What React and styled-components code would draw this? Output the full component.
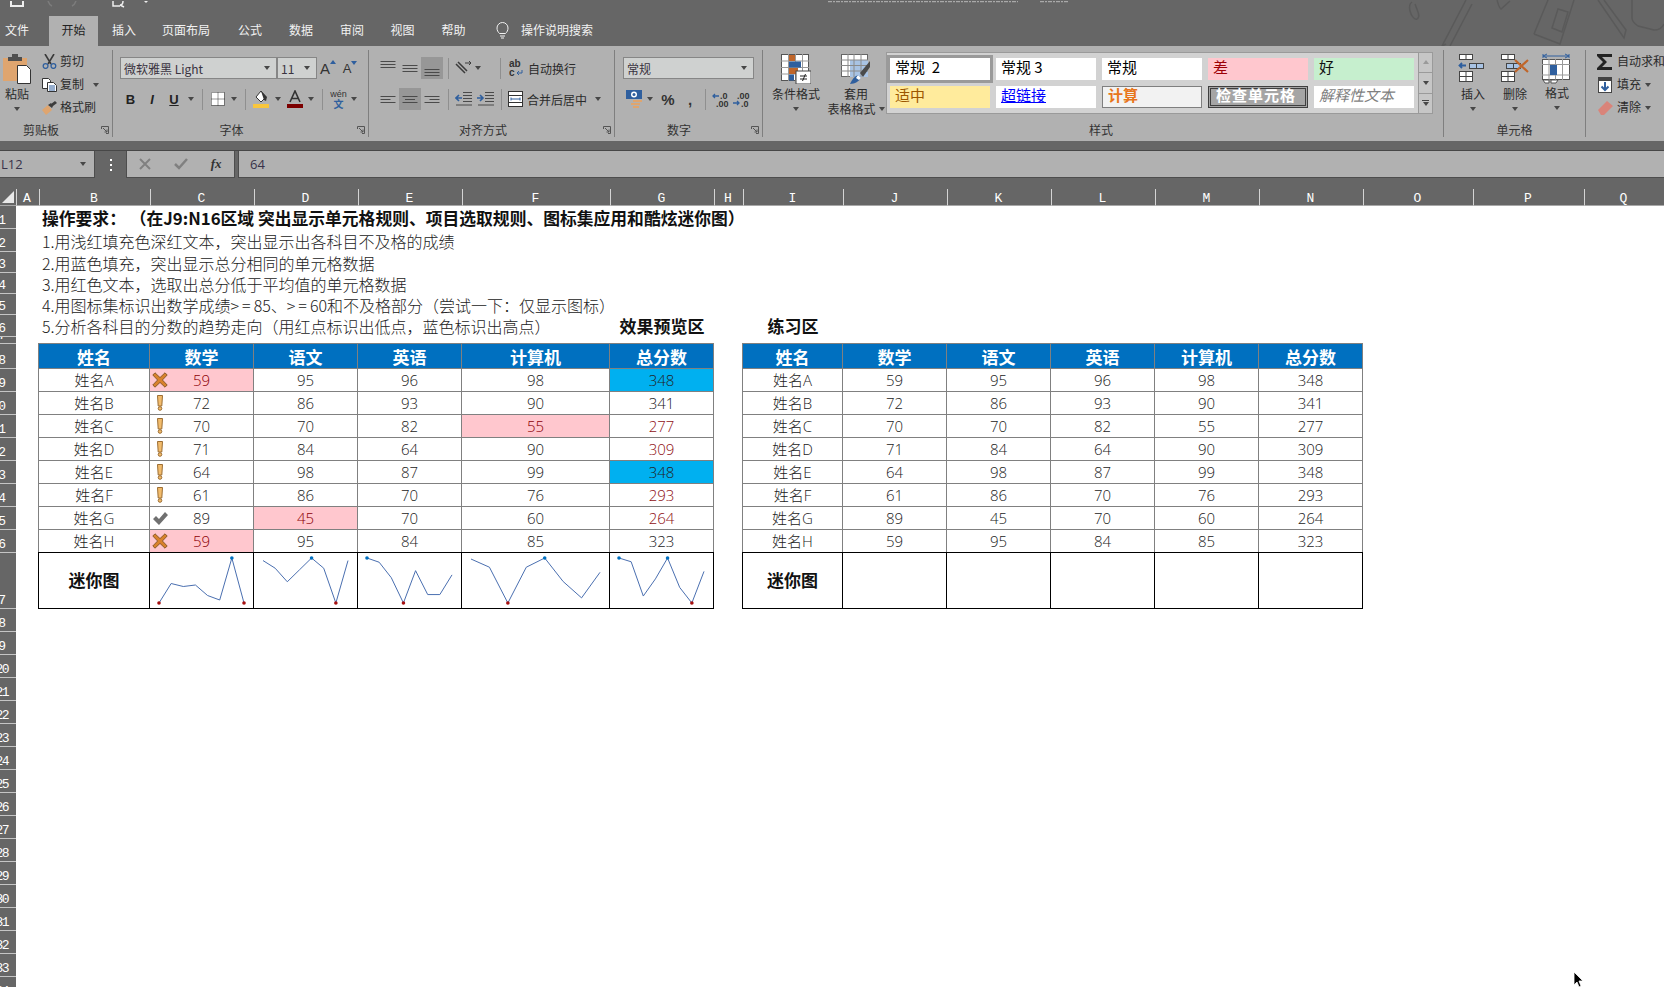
import styled, { createGlobalStyle } from 'styled-components'

const GlobalStyle = createGlobalStyle`
  html, body {
    margin: 0;
    padding: 0;
    height: 987px;
    overflow: hidden;
    background: #fff;
    font-family: "Noto Sans", "Noto Sans CJK SC", sans-serif;
  }
  * { box-sizing: border-box; }
`

const RIBBON = '#b1b1b1'
const DARK = '#666666'
const CJK = '"Noto Sans CJK SC", "Noto Sans", sans-serif'
const LIGHT = '"Open Sans", "Noto Sans CJK SC", sans-serif'

const Page = styled.div`
  position: relative;
  width: 1664px;
  height: 987px;
  overflow: hidden;
  background: #fff;
`

/* ---------- title bar ---------- */

const TitleBar = styled.div`
  position: relative;
  height: 46px;
  background: ${DARK};
`

const QuickRow = styled.div`
  height: 16px;
  overflow: hidden;
`

const Doodles = styled.svg`
  position: absolute;
  top: 0;
  left: 1400px;
`

const TabRow = styled.div`
  display: flex;
  height: 30px;
  font: 12px/27px ${CJK};
  color: #f2f2f2;
`

const Tab = styled.div`
  width: ${(p) => p.$w}px;
  margin-right: ${(p) => p.$mr || 0}px;
  text-align: center;
  white-space: nowrap;
  background: ${(p) => (p.$active ? RIBBON : 'transparent')};
  color: ${(p) => (p.$active ? '#222' : '#f2f2f2')};
`

const SearchHint = styled.div`
  display: flex;
  align-items: center;
  align-self: flex-start;
  height: 27px;
  gap: 12px;
  margin-left: 14px;
`

/* ---------- ribbon ---------- */

const Ribbon = styled.div`
  display: flex;
  height: 95px;
  padding-top: 4px;
  background: ${RIBBON};
  font: 12px/15px ${CJK};
  color: #2b2b2b;
`

const Group = styled.div`
  display: flex;
  flex-direction: column;
  flex: none;
  width: ${(p) => p.$w}px;
  height: 87px;
  border-right: ${(p) => (p.$last ? 'none' : '1px solid #7f7f7f')};
  overflow: ${(p) => (p.$last ? 'hidden' : 'visible')};
`

const GroupBody = styled.div`
  flex: 1;
  display: flex;
  flex-direction: ${(p) => (p.$row ? 'row' : 'column')};
  padding-left: ${(p) => p.$pl || 0}px;
  padding-top: ${(p) => p.$pt || 0}px;
`

const GroupFoot = styled.div`
  display: grid;
  grid-template-columns: 1fr auto 1fr;
  align-items: center;
  height: 15px;
  line-height: 15px;
  color: #333;
`

const FootLabel = styled.span`
  grid-column: 2;
  margin-right: ${(p) => p.$shift || 0}px;
`

const Launcher = styled.svg`
  grid-column: 3;
  justify-self: end;
  margin-right: 3px;
`

const ToolRow = styled.div`
  display: flex;
  align-items: center;
  height: 22px;
  margin-bottom: ${(p) => p.$mb || 0}px;
`

const Slot = styled.div`
  flex: none;
  display: flex;
  align-items: center;
  justify-content: center;
  width: ${(p) => p.$w}px;
  height: 22px;
  background: ${(p) => (p.$on ? '#979797' : 'transparent')};
`

const Rule = styled.div`
  width: 1px;
  height: 21px;
  background: #8f8f8f;
`

const Caret = styled.span`
  display: inline-block;
  flex: none;
  width: 0;
  height: 0;
  margin-left: ${(p) => p.$ml || 0}px;
  margin-right: ${(p) => p.$mr || 0}px;
  border-top: 4px solid #474747;
  border-left: 3.5px solid transparent;
  border-right: 3.5px solid transparent;
`

const Select = styled.div`
  display: flex;
  align-items: center;
  justify-content: space-between;
  flex: none;
  width: ${(p) => p.$w}px;
  height: 22px;
  padding: 0 6px 0 3px;
  background: #cfd1d0;
  border: 1px solid #868686;
  font-size: 12px;
  color: #3a3340;
  white-space: nowrap;
`

const BoldMark = styled.span`
  font: ${(p) => (p.$italic ? 'italic 700' : '700')} 13px "Liberation Sans", sans-serif;
  text-decoration: ${(p) => (p.$under ? 'underline' : 'none')};
  color: #222;
`

const SizeA = styled.span`
  display: inline-flex;
  align-items: flex-start;
  font: 400 ${(p) => p.$size}px/1 "Liberation Sans", sans-serif;
  color: #333;
`

const Tri = styled.span`
  display: inline-block;
  width: 0;
  height: 0;
  margin-top: -1px;
  border-left: 3px solid transparent;
  border-right: 3px solid transparent;
  ${(p) =>
    p.$down
      ? `border-top: 4px solid ${p.$color || '#2f5f9e'};`
      : `border-bottom: 4px solid ${p.$color || '#2f5f9e'};`}
`

const Wen = styled.span`
  display: flex;
  flex-direction: column;
  align-items: center;
  font: 9px/9px "Liberation Sans", sans-serif;
  color: #333;
  & > b {
    font: 700 10px/10px ${CJK};
    color: #2f5f9e;
  }
`

const Mark = styled.span`
  font: 700 ${(p) => p.$size}px/1 "Liberation Sans", sans-serif;
  color: #333;
`

const RowLabel = styled.span`
  margin-left: 2px;
  white-space: nowrap;
`

/* clipboard */

const BigCol = styled.div`
  flex: none;
  display: flex;
  flex-direction: column;
  align-items: center;
  width: ${(p) => p.$w}px;
  padding-top: ${(p) => p.$pt ?? 4}px;
  white-space: nowrap;
`

const BigIcon = styled.div`
  display: flex;
  justify-content: center;
  height: 30px;
  margin-bottom: 2px;
`

const CaretLine = styled.div`
  display: flex;
  align-items: center;
  justify-content: center;
  height: 15px;
`

const SmallCol = styled.div`
  display: flex;
  flex-direction: column;
  margin-left: ${(p) => p.$ml || 0}px;
`

const SmallItem = styled.div`
  display: flex;
  align-items: center;
  height: 23px;
  white-space: nowrap;
`

const SmallText = styled.span`
  margin-top: -2px;
`

const SmallIcon = styled.div`
  display: flex;
  justify-content: center;
  flex: none;
  width: ${(p) => p.$w || 18}px;
  margin-right: ${(p) => p.$mr ?? 2}px;
`

/* style gallery */

const Gallery = styled.div`
  display: flex;
  flex: none;
  width: 547px;
  height: 62px;
  margin-top: 2px;
  margin-left: 1px;
  background: #d2d2d2;
  border: 1px solid #9a9a9a;
`

const StyleGrid = styled.div`
  display: grid;
  grid-template-columns: repeat(5, 100px);
  grid-template-rows: 22px 22px;
  gap: 6px;
  flex: 1;
  padding: 5px 0 0 3px;
`

const StyleCell = styled.div`
  display: flex;
  align-items: center;
  padding: 0 0 5px 5px;
  font: ${(p) => p.$weight || 400} 15px/17px ${CJK};
  font-style: ${(p) => (p.$italic ? 'italic' : 'normal')};
  letter-spacing: ${(p) => p.$spacing || 0}px;
  text-decoration: ${(p) => (p.$link ? 'underline' : 'none')};
  background: ${(p) => p.$bg || '#fff'};
  color: ${(p) => p.$color || '#000'};
  border: ${(p) => p.$border || 'none'};
  box-shadow: ${(p) => (p.$selected ? '0 0 0 3px #9a9a9a' : 'none')};
  white-space: pre;
`

const Scroller = styled.div`
  display: flex;
  flex-direction: column;
  flex: none;
  width: 14px;
  border-left: 1px solid #9a9a9a;
`

const ScrollBtn = styled.div`
  flex: 1;
  display: flex;
  flex-direction: column;
  align-items: center;
  justify-content: center;
  gap: 1px;
  border-bottom: ${(p) => (p.$last ? 'none' : '1px solid #9a9a9a')};
  background: #c6c6c6;
`

const Bar = styled.span`
  width: 7px;
  height: 1px;
  background: #444;
`

/* ---------- formula bar ---------- */

const Band = styled.div`
  height: 10px;
  background: ${DARK};
  border-bottom: 1px solid #474747;
`

const FormulaBar = styled.div`
  display: flex;
  height: 27px;
  background: ${DARK};
`

const FormulaBox = styled.div`
  display: flex;
  align-items: center;
  flex: ${(p) => (p.$grow ? 1 : 'none')};
  width: ${(p) => p.$w || 0}px;
  margin-left: ${(p) => (p.$grow ? 3 : 0)}px;
  padding-left: ${(p) => (p.$grow ? 11 : 0)}px;
  background: ${RIBBON};
  border-left: ${(p) => (p.$first ? 'none' : '1px solid #4d4d4d')};
  border-right: ${(p) => (p.$grow ? 'none' : '1px solid #4d4d4d')};
  border-bottom: 1px solid #4d4d4d;
  font: 13px ${LIGHT};
  color: #38334a;
`

const NameText = styled.span`
  flex: 1;
  padding-left: 1px;
`

const Dots = styled.div`
  display: flex;
  flex-direction: column;
  align-items: center;
  justify-content: center;
  gap: 3px;
  width: 31px;
  & > i {
    width: 2px;
    height: 2px;
    background: #fff;
  }
`

const FxButton = styled.div`
  display: flex;
  justify-content: center;
  align-items: center;
  width: 36px;
  font: italic 700 13px "Liberation Serif", serif;
  color: #333;
`

/* ---------- sheet ---------- */

const colWidths = [16, 23, 111, 104, 104, 104, 148, 104, 29, 100, 104, 104, 104, 104, 104, 110, 111, 80]
const colLetters = ['A', 'B', 'C', 'D', 'E', 'F', 'G', 'H', 'I', 'J', 'K', 'L', 'M', 'N', 'O', 'P', 'Q']
const rowHeights = [23, 23, 21, 21, 21, 22, 7, 25, 23, 23, 23, 23, 23, 23, 23, 23, 56, ...Array(17).fill(23)]

const HeaderGap = styled.div`
  height: 11px;
  background: ${DARK};
`

const Sheet = styled.div`
  display: grid;
  grid-template-columns: ${colWidths.map((w) => `${w}px`).join(' ')};
  grid-template-rows: 17px ${rowHeights.map((h) => `${h}px`).join(' ')};
  background: #fff;
`

const Corner = styled.div`
  grid-column: 1;
  grid-row: 1;
  display: flex;
  align-items: flex-end;
  justify-content: flex-end;
  padding: 0 2px 2px 0;
  background: ${DARK};
  border-bottom: 1px solid #a8a8a8;
`

const ColHead = styled.div`
  grid-column: ${(p) => p.$col};
  grid-row: 1;
  padding-right: 2px;
  overflow: hidden;
  text-align: center;
  font: 13px/20px "Liberation Mono", monospace;
  color: #fff;
  background: ${DARK};
  border-left: 1px solid #d4d4d4;
  border-bottom: 1px solid #a8a8a8;
`

// the header is cut off on the left, so two-digit rows lose their first digit
const RowHead = styled.div`
  grid-column: 1;
  grid-row: ${(p) => p.$row + 1};
  display: flex;
  align-items: flex-end;
  justify-content: flex-end;
  padding-right: ${(p) => (p.$row > 9 ? 8 : 10)}px;
  overflow: hidden;
  font: 13px/15px "Liberation Mono", monospace;
  letter-spacing: ${(p) => (p.$row >= 20 ? -1.5 : p.$row > 9 ? 2 : 0)}px;
  color: #fff;
  background: ${DARK};
  border-bottom: 1px solid #c4c4c4;
`

const Note = styled.div`
  grid-column: 3 / span 6;
  grid-row: ${(p) => p.$row + 1};
  display: flex;
  align-items: center;
  padding-left: 3px;
  white-space: pre;
  font: ${(p) => (p.$bold ? '700 16.8px' : '300 16px')}/20px ${CJK};
  color: ${(p) => (p.$bold ? '#111' : '#222')};
`

const WideSign = styled.span`
  letter-spacing: 3px;
`

const ZoneTitle = styled.div`
  grid-column: ${(p) => p.$col};
  grid-row: 7;
  display: flex;
  align-items: center;
  justify-content: center;
  white-space: nowrap;
  font: 700 17px/20px ${CJK};
  color: #111;
`

const firstShadow = (color) => `-1px 0 0 ${color}`

const Cell = styled.div`
  grid-column: ${(p) => p.$col};
  grid-row: ${(p) => p.$row + 1};
  display: flex;
  align-items: center;
  justify-content: center;
  white-space: nowrap;
  font: 300 15px/20px ${LIGHT};
  background: ${(p) => p.$bg || '#fff'};
  color: ${(p) => p.$color || '#222'};
  border-right: 1px solid #808080;
  border-bottom: 1px solid #808080;
  box-shadow: ${(p) => (p.$first ? firstShadow('#808080') : 'none')};
`

const HeadCell = styled(Cell)`
  padding-top: 2px;
  font: 700 17px/20px ${CJK};
  color: #fff;
  background: #0070c0;
  box-shadow: 0 -1px 0 #808080 ${(p) => (p.$first ? `, ${firstShadow('#808080')}, -1px -1px 0 #808080` : '')};
`

const IconCell = styled(Cell)`
  display: grid;
  grid-template-columns: 1fr auto 1fr;
  & > svg {
    justify-self: start;
    margin-left: 2px;
  }
`

const TrendCell = styled.div`
  grid-column: ${(p) => p.$col};
  grid-row: ${(p) => p.$row + 1};
  display: flex;
  align-items: center;
  justify-content: center;
  padding-bottom: ${(p) => (p.$first ? 2 : 0)}px;
  font: 700 17px/20px ${CJK};
  color: #111;
  background: #fff;
  border-right: 1px solid #000;
  border-bottom: 1px solid #000;
  box-shadow: 0 -1px 0 #000 ${(p) => (p.$first ? `, ${firstShadow('#000')}, -1px -1px 0 #000` : '')};
`

const Pointer = styled.svg`
  position: absolute;
  left: 1573px;
  top: 972px;
`

/* ---------- drawings ---------- */

const LauncherIcon = () => (
  <Launcher width="8" height="8" viewBox="0 0 8 8" fill="none" stroke="#555">
    <path d="M.5 3V.5H7.5V7.5H5M2 2l4 4M6 3.5V6H3.5" />
  </Launcher>
)

const Lines = ({ v = 'mid', h = 'center' }) => {
  const top = { top: 1, mid: 5, bottom: 9 }[v]
  const wide = [15, 10, 15]
  return (
    <svg width="16" height="16" viewBox="0 0 16 16" stroke="#4a4a4a">
      {[0, 1, 2].map((i) => {
        const w = h === 'full' ? 15 : wide[i]
        const x = h === 'left' || h === 'full' ? 0.5 : h === 'right' ? 15.5 - w : 8 - w / 2
        return <path key={i} d={`M${x} ${top + i * 3 + 0.5}h${w}`} />
      })}
    </svg>
  )
}

const Indent = ({ right }) => (
  <svg width="17" height="14" viewBox="0 0 17 14" fill="none">
    <path d="M8 .5h9M8 3.500h9M8 6.500h9M8 9.500h9M1 13h16" stroke="#4a4a4a" />
    <path d={right ? 'M0 6h6M3 3l3 3-3 3' : 'M7 6H1M4 3 1 6l3 3'} stroke="#2f5f9e" strokeWidth="1.600" />
  </svg>
)

const PasteIcon = () => (
  <svg width="28" height="30" viewBox="0 0 28 30">
    <rect x="0" y="4" width="24" height="23" fill="#dfa56f" />
    <path d="M5 7V3h4V0h6v3h4v4z" fill="#4f4f4f" />
    <path d="M14.500 11.500h9l4 4v14h-13z" fill="#fff" stroke="#333" />
  </svg>
)

const ScissorsIcon = () => (
  <svg width="15" height="15" viewBox="0 0 15 15" fill="none">
    <path d="M3 0l6 10M12 0 6 10" stroke="#3a3a3a" strokeWidth="1.600" />
    <circle cx="3.600" cy="12" r="2.400" stroke="#2f5f9e" strokeWidth="1.300" />
    <circle cx="11.400" cy="12" r="2.400" stroke="#2f5f9e" strokeWidth="1.300" />
  </svg>
)

const CopyIcon = () => (
  <svg width="15" height="14" viewBox="0 0 15 14">
    <path d="M.5.5h6l2 2v8H.5z" fill="#fff" stroke="#333" />
    <path d="M5.500 4.500h6l3 3v6h-9z" fill="#fff" stroke="#333" />
    <path d="M7 8h6M7 10h6M7 12h6" stroke="#2f5f9e" />
  </svg>
)

const BrushIcon = () => (
  <svg width="15" height="14" viewBox="0 0 15 14">
    <path d="M0 9l6-5 4 5-6 5z" fill="#dfa56f" />
    <path d="M6 4l3-2 2 3-1 2z M9 3l4-3 2 2-4 3z" fill="#3c3c3c" />
  </svg>
)

const BorderIcon = () => (
  <svg width="14" height="14" viewBox="0 0 14 14">
    <rect width="13" height="13" fill="#fff" />
    <path d="M.5.5h13v13H.5zM7 .5v13M.5 7h13" fill="none" stroke="#333" strokeDasharray="1 1" />
  </svg>
)

const FillIcon = () => (
  <svg width="17" height="18" viewBox="0 0 17 18">
    <path d="M3 7l5-6 5 6-5 5z" fill="#fff" stroke="#333" />
    <path d="M8 1l6 6-1 4-2-1z" fill="#333" />
    <rect y="14" width="16" height="4" fill="#f9c63c" />
  </svg>
)

const FontColorIcon = () => (
  <svg width="16" height="18" viewBox="0 0 16 18">
    <path d="M3 12 8 1l5 11M5 8.500h6" fill="none" stroke="#333" strokeWidth="1.600" />
    <rect y="14" width="16" height="4" fill="#7c0000" />
  </svg>
)

const OrientIcon = () => (
  <svg width="17" height="16" viewBox="0 0 17 16" fill="none" stroke="#3b3b3b">
    <path d="M1 4l9 9M3 2l9 9" strokeWidth="1.500" />
    <path d="M10 3l6 0M16 3l-2-2M16 3l-2 2" />
  </svg>
)

const WrapIcon = () => (
  <svg width="15" height="18" viewBox="0 0 15 18">
    <text x="0" y="8" fontSize="10" fontWeight="700" fontFamily="Liberation Sans" fill="#333">ab</text>
    <text x="0" y="17" fontSize="10" fontWeight="700" fontFamily="Liberation Sans" fill="#333">c</text>
    <path d="M13 11v3H8M10 12l-2 2 2 2" fill="none" stroke="#2f5f9e" />
  </svg>
)

const MergeIcon = () => (
  <svg width="15" height="16" viewBox="0 0 15 16" fill="none">
    <rect x=".5" y=".5" width="14" height="15" fill="#fff" stroke="#333" />
    <path d="M.5 4.500h14M.5 11.500h14" stroke="#333" />
    <path d="M3 8h9M3 6.500v3M12 6.500v3" stroke="#2f5f9e" />
  </svg>
)

const MoneyIcon = () => (
  <svg width="17" height="18" viewBox="0 0 17 18">
    <rect width="16" height="9" fill="#2f5f9e" />
    <ellipse cx="8" cy="4.500" rx="3" ry="3" fill="#fff" />
    <circle cx="8" cy="4.500" r="1.500" fill="#2f5f9e" />
    <path d="M7 10h9v2H7zM5 13h9v2H5zM7 16h6v2H7z" fill="#dfa56f" />
  </svg>
)

const DecimalIcon = ({ more }) => (
  <svg width="18" height="15" viewBox="0 0 18 15" fontFamily="Liberation Sans" fontSize="9" fontWeight="700" fill="#333">
    <text x={more ? 4 : 8} y="7">{more ? '.00' : '.0'}</text>
    <text x={more ? 8 : 4} y="15">{more ? '.0' : '.00'}</text>
    <path d={more ? 'M0 11h6M4 9l2 2-2 2' : 'M7 4H1M3 2 1 4l2 2'} fill="none" stroke="#2f5f9e" strokeWidth="1.300" />
  </svg>
)

const CondIcon = () => (
  <svg width="30" height="30" viewBox="0 0 30 30">
    <rect x=".5" y=".5" width="27" height="26" fill="#fff" stroke="#555" />
    <path d="M7.500 0v27M14.500 0v27M21.500 0v27M0 7h28M0 13.500h28M0 20h28" stroke="#999" />
    <rect x="8" y="1" width="6" height="6" fill="#c0662a" />
    <rect x="8" y="7.500" width="12" height="6" fill="#2f5f9e" />
    <rect x="8" y="14" width="9" height="6" fill="#c0662a" />
    <rect x="8" y="20.500" width="5" height="6" fill="#2f5f9e" />
    <rect x="15" y="17" width="15" height="13" fill="#fff" stroke="#444" />
    <path d="M19 22h7M19 25h7M24.500 20l-3 7" stroke="#222" fill="none" />
  </svg>
)

const TableBrushIcon = () => (
  <svg width="30" height="30" viewBox="0 0 30 30">
    <rect x=".5" y=".5" width="26" height="22" fill="#fff" stroke="#666" />
    <rect x="9" y="6" width="18" height="17" fill="#a8c3e4" />
    <path d="M7 0v23M13 0v23M20 0v23M0 6h27M0 11.500h27M0 17h27" stroke="#8a8a8a" />
    <path d="M9 30c2-5 5-8 8-9l3 3c-2 3-6 6-11 6z" fill="#2f5f9e" />
    <path d="M15 24l2-3 3 3-2 2z" fill="#fff" />
    <path d="M19 19L29 7v6L22 23z" fill="#4a4a4a" />
  </svg>
)

const SmallTable = ({ x, y, w, h, cols, rows, fill }) => (
  <g>
    <rect x={x + 0.5} y={y + 0.5} width={w} height={h} fill={fill || '#fff'} stroke="#444" />
    {cols && <path d={`M${x + w / 2 + 0.5} ${y}v${h}`} stroke="#444" />}
    {rows && <path d={`M${x} ${y + h / 2 + 0.5}h${w}`} stroke="#444" />}
  </g>
)

const InsertIcon = ({ del }) => (
  <svg width="30" height="28" viewBox="0 0 30 28">
    <SmallTable x={1} y={0} w={13} h={5} cols />
    <SmallTable x={del ? 6 : 11} y={9} w={14} h={5} cols fill="#a8c3e4" />
    {!del && <path d="M8 11.500H2M4 9 1.500 11.500 4 14" fill="none" stroke="#2f5f9e" strokeWidth="1.800" />}
    <SmallTable x={1} y={17} w={13} h={10} cols rows />
    {del && <path d="M15 6l13 12M28 6 15 18" stroke="#c0662a" strokeWidth="2.200" />}
  </svg>
)

const FormatIcon = () => (
  <svg width="30" height="31" viewBox="0 0 30 31">
    <path d="M1 3h26M1 1v4M27 1v4M5 1 1 3l4 2M23 1l4 2-4 2" fill="none" stroke="#2f5f9e" />
    <rect x=".5" y="6.500" width="27" height="20" fill="#fff" stroke="#555" />
    <path d="M7 6v21M13.500 6v21M20.500 6v21M0 11.500h28M0 22h28" stroke="#999" />
    <rect x="8" y="12" width="7" height="10" fill="#2f5f9e" />
    <path d="M1 27h6v3H3zM9 27h7l-2 3H9z" fill="#fff" stroke="#555" />
  </svg>
)

const SumIcon = () => (
  <svg width="16" height="16" viewBox="0 0 16 16">
    <path d="M0 0h15v3H5l5 5-5 5h10v3H0v-2l6-6-6-6z" fill="#222" />
  </svg>
)

const DownFillIcon = () => (
  <svg width="14" height="16" viewBox="0 0 14 16">
    <rect x=".5" y=".5" width="13" height="15" fill="#fff" stroke="#444" />
    <rect width="14" height="4" fill="#444" />
    <path d="M7 5v8M3.500 9.500 7 13l3.500-3.500" fill="none" stroke="#2f5f9e" strokeWidth="2" />
  </svg>
)

const EraserIcon = () => (
  <svg width="15" height="14" viewBox="0 0 15 14">
    <path d="M0 9l9-9 6 5-9 9H3z" fill="#d9847a" />
  </svg>
)

const FailIcon = () => (
  <svg width="16" height="16" viewBox="0 0 16 16">
    <path
      d="M3 .8 8 5.600 13 .8 15.200 3 10.400 8l4.800 5-2.200 2.200L8 10.400l-5 4.800L.8 13l4.800-5L.8 3z"
      fill="#d9822b"
      stroke="#8a5a2a"
    />
  </svg>
)

const WarnIcon = () => (
  <svg width="16" height="16" viewBox="-4 0 16 16">
    <path d="M1.500.5h5l-.7 10.500H2.200z" fill="#f2bc6c" stroke="#9c6d32" />
    <circle cx="4" cy="13.500" r="1.800" fill="#f2bc6c" stroke="#9c6d32" />
  </svg>
)

const PassIcon = () => (
  <svg width="16" height="15" viewBox="0 0 16 15">
    <path d="M1 8l3-3 3 3 6-7 3 3-9 10z" fill="#707070" />
  </svg>
)

/* sparkline, with the low points red and the high points blue */
const Sparkline = ({ values, width }) => {
  const h = 56
  const lo = Math.min(...values)
  const hi = Math.max(...values)
  const padX = 9
  const pts = values.map((v, i) => [
    padX + (i * (width - padX * 2 - 1)) / (values.length - 1),
    h - 6 - ((v - lo) / (hi - lo)) * (h - 11),
  ])
  return (
    <svg width={width - 1} height={h - 1} viewBox={`0 0 ${width - 1} ${h - 1}`}>
      <polyline points={pts.map((p) => p.join(',')).join(' ')} fill="none" stroke="#4a6fb0" strokeWidth="1" />
      {pts.map((p, i) =>
        values[i] === lo || values[i] === hi ? (
          <circle key={i} cx={p[0]} cy={p[1]} r="1.800" fill={values[i] === lo ? '#a50f0f' : '#0070c0'} />
        ) : null,
      )}
    </svg>
  )
}

/* ---------- data ---------- */

const heads = ['姓名', '数学', '语文', '英语', '计算机', '总分数']

const students = [
  ['姓名A', 59, 95, 96, 98, 348],
  ['姓名B', 72, 86, 93, 90, 341],
  ['姓名C', 70, 70, 82, 55, 277],
  ['姓名D', 71, 84, 64, 90, 309],
  ['姓名E', 64, 98, 87, 99, 348],
  ['姓名F', 61, 86, 70, 76, 293],
  ['姓名G', 89, 45, 70, 60, 264],
  ['姓名H', 59, 95, 84, 85, 323],
]

const notes = [
  '1.用浅红填充色深红文本，突出显示出各科目不及格的成绩',
  '2.用蓝色填充，突出显示总分相同的单元格数据',
  '3.用红色文本，选取出总分低于平均值的单元格数据',
  <>
    4.用图标集标识出数学成绩<WideSign>&gt;=</WideSign>85、<WideSign>&gt;=</WideSign>60和不及格部分（尝试一下：仅显示图标）
  </>,
  '5.分析各科目的分数的趋势走向（用红点标识出低点，蓝色标识出高点）',
]

const galleryCells = [
  { text: '常规  2', selected: true },
  { text: '常规 3' },
  { text: '常规' },
  { text: '差', bg: '#ffc7ce', color: '#9c0006' },
  { text: '好', bg: '#c6efce', color: '#111' },
  { text: '适中', bg: '#ffeb9c', color: '#9c5700' },
  { text: '超链接', color: '#0000ff', link: true },
  { text: '计算', bg: '#f2f2f2', color: '#e8761c', weight: 700, border: '1px solid #7f7f7f' },
  { text: '检查单元格', bg: '#a5a5a5', color: '#fff', weight: 700, border: '3px double #3f3f3f', spacing: 1 },
  { text: '解释性文本', color: '#7f7f7f', italic: true },
]

const average = students.reduce((sum, s) => sum + s[5], 0) / students.length
const duplicate = (v) => students.filter((s) => s[5] === v).length > 1

const scoreIcon = (v) => {
  if (v >= 85) return <PassIcon />
  if (v >= 60) return <WarnIcon />
  return <FailIcon />
}

const ScoreTable = ({ startCol, preview }) => (
  <>
    {heads.map((h, c) => (
      <HeadCell key={h} $col={startCol + c} $row={8} $first={c === 0}>
        {h}
      </HeadCell>
    ))}
    {students.map((s, r) =>
      s.map((v, c) => {
        const col = startCol + c
        const row = 9 + r
        const failing = preview && c > 0 && c < 5 && v < 60
        if (preview && c === 1) {
          return (
            <IconCell key={col} $col={col} $row={row} $bg={failing ? '#ffc7ce' : undefined} $color={failing ? '#8c0005' : undefined}>
              {scoreIcon(v)}
              <span>{v}</span>
            </IconCell>
          )
        }
        let bg
        let color
        if (failing) {
          bg = '#ffc7ce'
          color = '#8c0005'
        }
        if (preview && c === 5) {
          if (duplicate(v)) bg = '#00b0f0'
          else if (v < average) color = '#8f0f14'
        }
        return (
          <Cell key={col} $col={col} $row={row} $first={c === 0} $bg={bg} $color={color}>
            {v}
          </Cell>
        )
      }),
    )}
    <TrendCell $col={startCol} $row={17} $first>
      迷你图
    </TrendCell>
    {[1, 2, 3, 4, 5].map((c) => (
      <TrendCell key={c} $col={startCol + c} $row={17}>
        {preview && <Sparkline values={students.map((s) => s[c])} width={colWidths[startCol + c - 1]} />}
      </TrendCell>
    ))}
  </>
)

export default function App() {
  return (
    <Page>
      <GlobalStyle />
      <TitleBar>
        <QuickRow>
          <svg width="1100" height="16" viewBox="0 0 1100 16" fill="none">
            <path d="M11 0v5h12V0" stroke="#eee" strokeWidth="2" />
            <path d="M48 0c1 3 2 4 4 5M76 0c-1 3-2 4-4 5" stroke="#7c7c7c" strokeWidth="1.500" />
            <path d="M113 0v5h7M123 0c0 3-1 4-3 4l4 2" stroke="#eee" strokeWidth="1.500" />
            <path d="M144 0l2 2 2-2z" fill="#eee" />
            <path d="M828 .5h75M900 .5h118M1040 .5h28" stroke="#a9a9a9" strokeWidth="1.500" strokeDasharray="4 1 2 1" />
          </svg>
        </QuickRow>
        <Doodles width="264" height="46" viewBox="0 0 264 46" fill="none" stroke="#5a5a5a" strokeWidth="1.500">
          <path d="M12 2c-3 2-3 5-2 9 1 4 4 9 7 8 2-1 2-4 1-7L15 4" />
          <path d="M42 46 66 0M50 46 72 4M42 46l4-2" />
          <path d="M97 0c1 3 2 8 4 9l9-8" />
          <path d="M134 34 148 0M134 34l26 10 14-44M162 32l6-20-10-3-6 19z" />
          <path d="M198 0l26 38 2-8-22-30" />
          <path d="M232 0v18c0 4 3 6 6 8l16 4c4 0 8-2 10-6" />
        </Doodles>
        <TabRow>
          <Tab $w={34} $mr={15}>文件</Tab>
          <Tab $w={49} $active>开始</Tab>
          <Tab $w={52}>插入</Tab>
          <Tab $w={72}>页面布局</Tab>
          <Tab $w={56}>公式</Tab>
          <Tab $w={46}>数据</Tab>
          <Tab $w={56}>审阅</Tab>
          <Tab $w={45}>视图</Tab>
          <Tab $w={57}>帮助</Tab>
          <SearchHint>
            <svg width="13" height="18" viewBox="0 0 13 18" fill="none" stroke="#f2f2f2">
              <path d="M3.500 12.500C2 11 1 9.500 1 7a5.500 5.500 0 0 1 11 0c0 2.500-1 4-2.500 5.500zM4 15h5M5 17h3" />
            </svg>
            操作说明搜索
          </SearchHint>
        </TabRow>
      </TitleBar>

      <Ribbon>
        <Group $w={113}>
          <GroupBody $row>
            <BigCol $w={34}>
              <BigIcon><PasteIcon /></BigIcon>
              粘贴
              <CaretLine><Caret /></CaretLine>
            </BigCol>
            <SmallCol $ml={6}>
              <SmallItem>
                <SmallIcon><ScissorsIcon /></SmallIcon>
                <SmallText>剪切</SmallText>
              </SmallItem>
              <SmallItem>
                <SmallIcon><CopyIcon /></SmallIcon>
                <SmallText>复制</SmallText>
                <Caret $ml={9} />
              </SmallItem>
              <SmallItem>
                <SmallIcon><BrushIcon /></SmallIcon>
                <SmallText>格式刷</SmallText>
              </SmallItem>
            </SmallCol>
          </GroupBody>
          <GroupFoot>
            <FootLabel $shift={30}>剪贴板</FootLabel>
            <LauncherIcon />
          </GroupFoot>
        </Group>

        <Group $w={256}>
          <GroupBody $pl={7} $pt={7}>
            <ToolRow $mb={9}>
              <Select $w={157}>
                微软雅黑 Light
                <Caret />
              </Select>
              <Select $w={40}>
                11
                <Caret />
              </Select>
              <Slot $w={22}><SizeA $size={15}>A<Tri /></SizeA></Slot>
              <Slot $w={22}><SizeA $size={13}>A<Tri $down /></SizeA></Slot>
            </ToolRow>
            <ToolRow>
              <Slot $w={21}><BoldMark>B</BoldMark></Slot>
              <Slot $w={22}><BoldMark $italic>I</BoldMark></Slot>
              <Slot $w={22}><BoldMark $under>U</BoldMark></Slot>
              <Slot $w={12}><Caret /></Slot>
              <Slot $w={10}><Rule /></Slot>
              <Slot $w={21}><BorderIcon /></Slot>
              <Slot $w={12}><Caret /></Slot>
              <Slot $w={10}><Rule /></Slot>
              <Slot $w={22}><FillIcon /></Slot>
              <Slot $w={12}><Caret /></Slot>
              <Slot $w={22}><FontColorIcon /></Slot>
              <Slot $w={10}><Caret /></Slot>
              <Slot $w={13}><Rule /></Slot>
              <Slot $w={19}><Wen>wén<b>文</b></Wen></Slot>
              <Slot $w={12}><Caret /></Slot>
            </ToolRow>
          </GroupBody>
          <GroupFoot>
            <FootLabel $shift={18}>字体</FootLabel>
            <LauncherIcon />
          </GroupFoot>
        </Group>

        <Group $w={246}>
          <GroupBody $pl={8} $pt={7}>
            <ToolRow $mb={9}>
              <Slot $w={22}><Lines v="top" h="full" /></Slot>
              <Slot $w={22}><Lines v="mid" h="full" /></Slot>
              <Slot $w={22} $on><Lines v="bottom" h="full" /></Slot>
              <Slot $w={10}><Rule /></Slot>
              <Slot $w={20}><OrientIcon /></Slot>
              <Slot $w={10}><Caret /></Slot>
              <Slot $w={12} />
              <Slot $w={11}><Rule /></Slot>
              <Slot $w={20}><WrapIcon /></Slot>
              <RowLabel>自动换行</RowLabel>
            </ToolRow>
            <ToolRow>
              <Slot $w={22}><Lines h="left" /></Slot>
              <Slot $w={22} $on><Lines h="center" /></Slot>
              <Slot $w={22}><Lines h="right" /></Slot>
              <Slot $w={10}><Rule /></Slot>
              <Slot $w={21}><Indent /></Slot>
              <Slot $w={22}><Indent right /></Slot>
              <Slot $w={10}><Rule /></Slot>
              <Slot $w={19}><MergeIcon /></Slot>
              <RowLabel>合并后居中</RowLabel>
              <Caret $ml={8} />
            </ToolRow>
          </GroupBody>
          <GroupFoot>
            <FootLabel $shift={17}>对齐方式</FootLabel>
            <LauncherIcon />
          </GroupFoot>
        </Group>

        <Group $w={148}>
          <GroupBody $pl={8} $pt={7}>
            <ToolRow $mb={9}>
              <Select $w={131}>
                常规
                <Caret />
              </Select>
            </ToolRow>
            <ToolRow>
              <Slot $w={22}><MoneyIcon /></Slot>
              <Slot $w={10}><Caret /></Slot>
              <Slot $w={26}><Mark $size={15}>%</Mark></Slot>
              <Slot $w={18}><Mark $size={15}>,</Mark></Slot>
              <Slot $w={12}><Rule /></Slot>
              <Slot $w={20}><DecimalIcon /></Slot>
              <Slot $w={22}><DecimalIcon more /></Slot>
            </ToolRow>
          </GroupBody>
          <GroupFoot>
            <FootLabel $shift={19}>数字</FootLabel>
            <LauncherIcon />
          </GroupFoot>
        </Group>

        <Group $w={681}>
          <GroupBody $row $pl={2}>
            <BigCol $w={62}>
              <BigIcon><CondIcon /></BigIcon>
              条件格式
              <CaretLine><Caret /></CaretLine>
            </BigCol>
            <BigCol $w={58}>
              <BigIcon><TableBrushIcon /></BigIcon>
              套用
              <CaretLine>
                表格格式
                <Caret $ml={3} />
              </CaretLine>
            </BigCol>
            <Gallery>
              <StyleGrid>
                {galleryCells.map((g) => (
                  <StyleCell
                    key={g.text}
                    $bg={g.bg}
                    $color={g.color}
                    $weight={g.weight}
                    $border={g.border}
                    $italic={g.italic}
                    $link={g.link}
                    $selected={g.selected}
                    $spacing={g.spacing}
                  >
                    {g.text}
                  </StyleCell>
                ))}
              </StyleGrid>
              <Scroller>
                <ScrollBtn><Tri $color="#9a9a9a" /></ScrollBtn>
                <ScrollBtn><Caret /></ScrollBtn>
                <ScrollBtn $last><Bar /><Caret /></ScrollBtn>
              </Scroller>
            </Gallery>
          </GroupBody>
          <GroupFoot>
            <FootLabel $shift={4}>样式</FootLabel>
          </GroupFoot>
        </Group>

        <Group $w={142}>
          <GroupBody $row $pl={8}>
            <BigCol $w={42}>
              <BigIcon><InsertIcon /></BigIcon>
              插入
              <CaretLine><Caret /></CaretLine>
            </BigCol>
            <BigCol $w={42}>
              <BigIcon><InsertIcon del /></BigIcon>
              删除
              <CaretLine><Caret /></CaretLine>
            </BigCol>
            <BigCol $w={42} $pt={3}>
              <BigIcon><FormatIcon /></BigIcon>
              格式
              <CaretLine><Caret /></CaretLine>
            </BigCol>
          </GroupBody>
          <GroupFoot>
            <FootLabel>单元格</FootLabel>
          </GroupFoot>
        </Group>

        <Group $w={78} $last>
          <GroupBody $pl={11}>
            <SmallCol>
              <SmallItem>
                <SmallIcon $w={16} $mr={4}><SumIcon /></SmallIcon>
                <SmallText>自动求和</SmallText>
              </SmallItem>
              <SmallItem>
                <SmallIcon $w={16} $mr={4}><DownFillIcon /></SmallIcon>
                <SmallText>填充</SmallText>
                <Caret $ml={4} />
              </SmallItem>
              <SmallItem>
                <SmallIcon $w={16} $mr={4}><EraserIcon /></SmallIcon>
                <SmallText>清除</SmallText>
                <Caret $ml={4} />
              </SmallItem>
            </SmallCol>
          </GroupBody>
        </Group>
      </Ribbon>

      <Band />
      <FormulaBar>
        <FormulaBox $w={95} $first>
          <NameText>L12</NameText>
          <Caret $mr={8} />
        </FormulaBox>
        <Dots><i /><i /><i /></Dots>
        <FormulaBox $w={109}>
          <FxButton>
            <svg width="12" height="12" viewBox="0 0 12 12" stroke="#808080" strokeWidth="2"><path d="M1 1l10 10M11 1 1 11" /></svg>
          </FxButton>
          <FxButton>
            <svg width="14" height="12" viewBox="0 0 14 12" fill="none" stroke="#808080" strokeWidth="2.500"><path d="M1 6l4 4 8-9" /></svg>
          </FxButton>
          <FxButton>fx</FxButton>
        </FormulaBox>
        <FormulaBox $grow>64</FormulaBox>
      </FormulaBar>
      <HeaderGap />

      <Sheet>
        <Corner>
          <svg width="12" height="12" viewBox="0 0 12 12"><path d="M12 0v12H0z" fill="#e8e8e8" /></svg>
        </Corner>
        {colLetters.map((l, i) => (
          <ColHead key={l} $col={i + 2}>{l}</ColHead>
        ))}
        {rowHeights.map((_, i) => (
          <RowHead key={i} $row={i + 1}>{i + 1}</RowHead>
        ))}

        <Note $row={1} $bold>{'操作要求： （在J9:N16区域 突出显示单元格规则、项目选取规则、图标集应用和酷炫迷你图）'}</Note>
        {notes.map((n, i) => (
          <Note key={i} $row={i + 2}>{n}</Note>
        ))}
        <ZoneTitle $col={8}>效果预览区</ZoneTitle>
        <ZoneTitle $col={10}>练习区</ZoneTitle>

        <ScoreTable startCol={3} preview />
        <ScoreTable startCol={10} />
      </Sheet>

      <Pointer width="13" height="16" viewBox="0 0 13 16">
        <path d="M1 0v13l3-3 2 5 2-1-2-5h4z" fill="#000" stroke="#fff" strokeWidth=".8" />
      </Pointer>
    </Page>
  )
}
